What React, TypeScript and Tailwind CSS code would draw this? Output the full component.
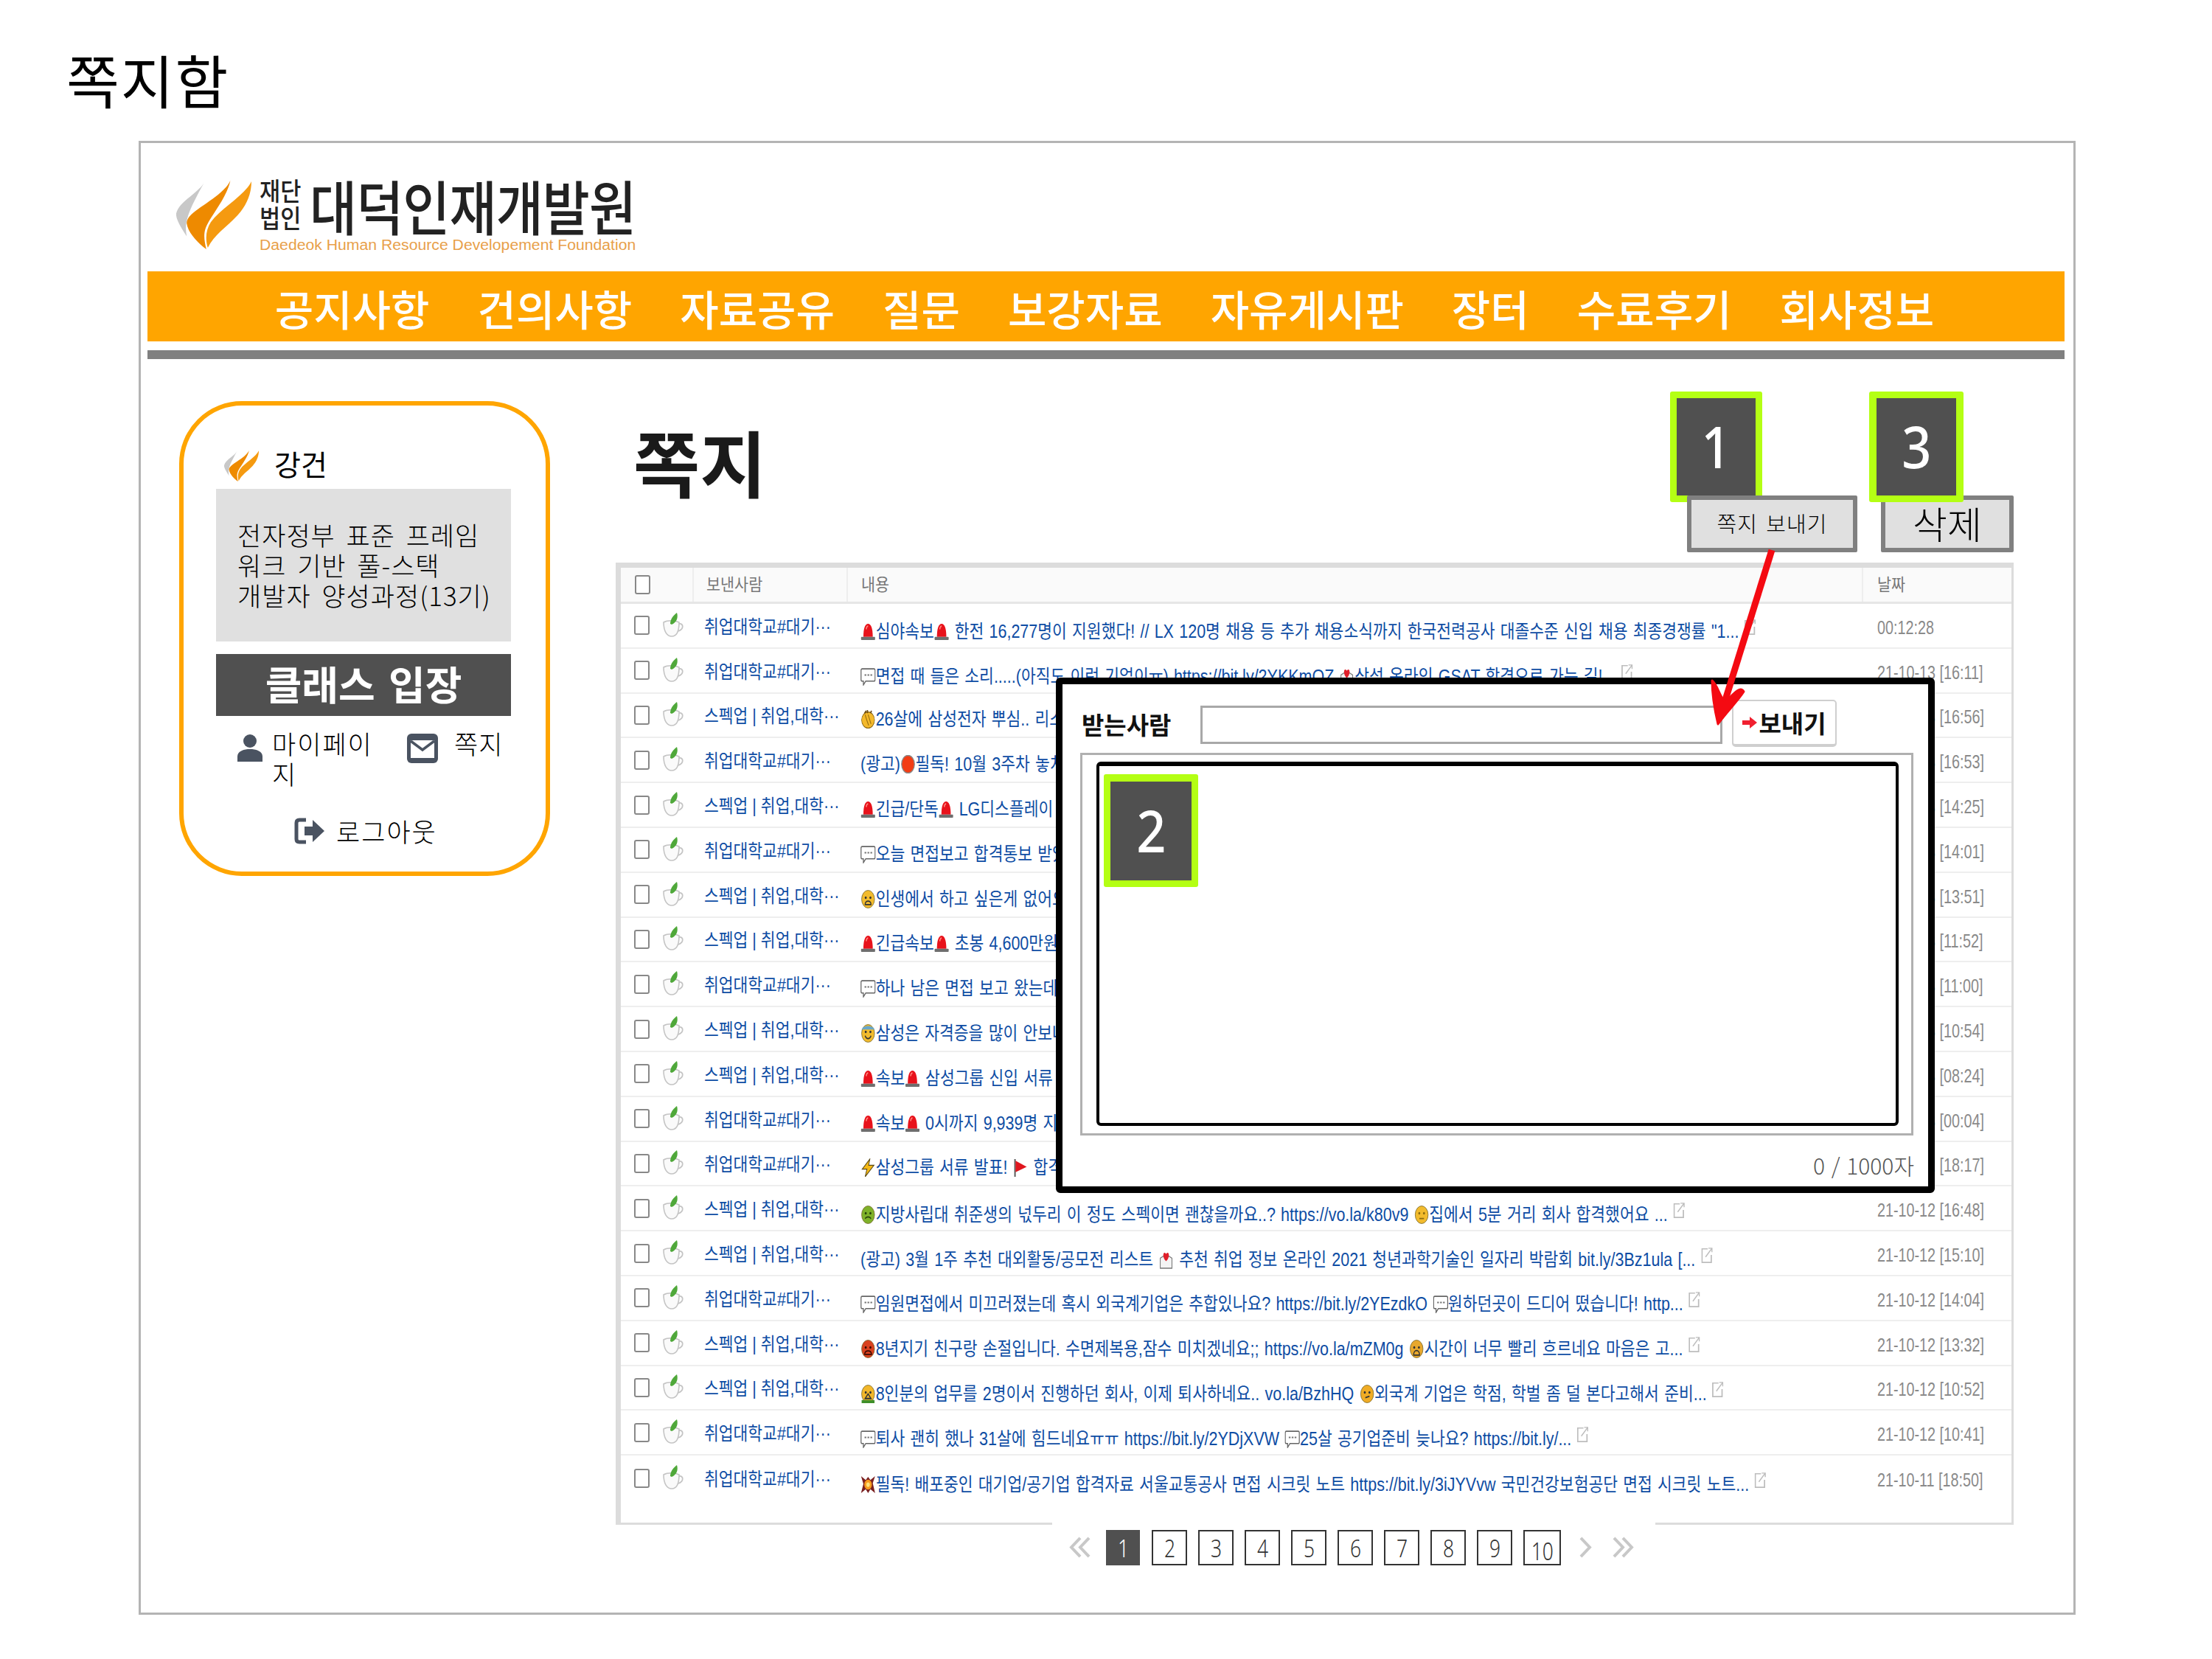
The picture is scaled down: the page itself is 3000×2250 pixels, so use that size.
import React from "react";

const KR = "font-['Noto_Sans_CJK_KR','Noto_Sans',sans-serif]";
const ROWTXT = "font-['Liberation_Sans','Noto_Sans_CJK_KR',sans-serif]";

function Flame({ className }: { className: string }) {
  return (
    <svg viewBox="0 0 100 100" preserveAspectRatio="none" className={className}>
      <path d="M38 3C30 20 4 30 0 48C-1 56 8 70 14 80C10 60 16 45 38 3Z" fill="#c8c8c8" />
      <path d="M72 2C60 28 12 45 14 62C16 76 30 90 40 98C36 80 36 72 44 58C52 44 68 22 72 2Z" fill="#ee8a00" />
      <path d="M100 3C92 22 60 40 46 60C40 70 38 82 42 96C50 78 66 68 82 50C94 36 100 20 100 3Z" fill="#f59a10" />
    </svg>
  );
}

function Cup() {
  return (
    <svg viewBox="0 0 30 33" className="w-[30px] h-[33px] shrink-0 -mt-[2px]">
      <path d="M3 13C3 26 8 32 14 32C20 32 24 26 24 13C18 10 8 10 3 13Z" fill="#fafafa" stroke="#c4c4c4" strokeWidth="1.6" />
      <path d="M24 15C30 14 31 22 23 25" fill="none" stroke="#c4c4c4" strokeWidth="1.8" />
      <path d="M12 15C12 8 17 3 21 0C23 6 21 13 14 16Z" fill="#4fa83a" />
    </svg>
  );
}

function Face({ c, mouth, eye = "#333", hat }: { c: string; mouth?: string; eye?: string; hat?: string }) {
  return (
    <>
      <ellipse cx="13" cy="12" rx="11" ry="11.5" fill={c} stroke="#7a6a30" strokeWidth="0.9" />
      <circle cx="9" cy="10" r="1.7" fill={eye} />
      <circle cx="17" cy="10" r="1.7" fill={eye} />
      <path d={mouth || "M8 16H18"} stroke={eye} strokeWidth="1.7" fill="none" />
      {hat && <path d="M2 7C5 1 21 1 24 7Z" fill={hat} />}
    </>
  );
}

function Emo({ k }: { k: string }) {
  let g: React.ReactNode = null;
  switch (k) {
    case "siren":
      g = (
        <>
          <path d="M5 19C5 8 8 2 13 2C18 2 21 8 21 19Z" fill="#e8121b" />
          <path d="M10 9C10 6 12 5 13 5" stroke="#ff8a80" strokeWidth="2" fill="none" />
          <rect x="1" y="19" width="24" height="4" rx="1" fill="#6e6e6e" />
        </>
      );
      break;
    case "bubble":
      g = (
        <>
          <path d="M3 2H23Q25 2 25 4V16Q25 18 23 18H9L5 23V18H3Q1 18 1 16V4Q1 2 3 2Z" fill="#fff" stroke="#666" strokeWidth="1.6" />
          <path d="M7 10H10M12 10H15M17 10H20" stroke="#777" strokeWidth="2" />
        </>
      );
      break;
    case "clap":
      g = (
        <>
          <ellipse cx="13" cy="13" rx="11" ry="10.5" fill="#f4b92b" stroke="#8a6510" strokeWidth="1" />
          <path d="M7 4L10 1M12 4V0M17 4L19 1" stroke="#6a4a10" strokeWidth="2" />
          <path d="M8 6C10 12 12 16 14 20M13 6C15 10 16 14 18 18" stroke="#9a7010" strokeWidth="1.4" fill="none" />
        </>
      );
      break;
    case "red":
      g = <ellipse cx="13" cy="12" rx="11" ry="11.5" fill="#f23c14" stroke="#8a8a8a" strokeWidth="1.6" />;
      break;
    case "face":
      g = <Face c="#f2bb2d" mouth="M8 19C8 13 18 13 18 19Z" />;
      break;
    case "yellow":
      g = <Face c="#f2bb2d" mouth="M9 17H17" eye="#8a6a10" />;
      break;
    case "cry":
      g = <Face c="#e8a82d" mouth="M8 20C8 12 18 12 18 20Z" />;
      break;
    case "think":
      g = <Face c="#f0ac25" mouth="M10 17L17 15" />;
      break;
    case "cool":
      g = <Face c="#f2bb2d" mouth="M8 15C10 20 16 20 18 15" hat="#68a7c9" />;
      break;
    case "green":
      g = <Face c="#7fb22a" mouth="M8 17C10 14 16 14 18 17" eye="#26400c" />;
      break;
    case "redface":
      g = <Face c="#d9411e" mouth="M7 19C8 13 18 13 19 19Z" eye="#3a0a04" />;
      break;
    case "scream":
      g = (
        <>
          <Face c="#f2b72a" mouth="M8 18L13 12L18 18Z" />
          <rect x="2" y="20" width="22" height="4" fill="#3f8f2a" />
        </>
      );
      break;
    case "mail":
      g = (
        <>
          <path d="M3 10L13 5L23 10V23H3Z" fill="#f4f4f4" stroke="#777" strokeWidth="1.3" />
          <path d="M13 14C6 9 8 2 11 3C12 3 13 4 13 5C13 4 14 3 15 3C18 2 20 9 13 14Z" fill="#e01f2a" />
        </>
      );
      break;
    case "bolt":
      g = <path d="M16 1L3 14H11L8 24L23 9H14Z" fill="#f5b915" stroke="#5a4a18" strokeWidth="1.2" />;
      break;
    case "flag":
      g = (
        <>
          <path d="M4 1V24" stroke="#555" strokeWidth="2.4" />
          <path d="M5 3L24 11L5 18Z" fill="#e0161e" />
        </>
      );
      break;
    case "boom":
      g = (
        <>
          <path d="M1 1L9 6L13 2L17 6L25 1L21 10L25 23L17 18L13 23L9 18L1 23L5 11Z" fill="#7a2020" />
          <ellipse cx="13" cy="12" rx="6.5" ry="6.5" fill="#f79a1e" />
          <circle cx="13" cy="12" r="3" fill="#ffe27a" />
        </>
      );
      break;
  }
  return (
    <svg viewBox="0 0 26 24" preserveAspectRatio="none" className="w-[24px] h-[25px] inline-block align-[-4px]">
      {g}
    </svg>
  );
}

function Rich({ s }: { s: string }) {
  const parts = s.split(/\{(\w+)\}/);
  return (
    <>
      {parts.map((p, i) => (i % 2 === 1 ? <Emo key={i} k={p} /> : <span key={i}>{p}</span>))}
    </>
  );
}

function Ext() {
  return (
    <svg viewBox="0 0 16 24" preserveAspectRatio="none" className="w-[18px] h-[22px] inline-block ml-[9px] align-[4px]">
      <path d="M9 3H1V23H14V12" fill="none" stroke="#bdbdbd" strokeWidth="1.8" />
      <path d="M6 15L15 2M10 2H15V8" fill="none" stroke="#bdbdbd" strokeWidth="1.5" />
    </svg>
  );
}

const A = "취업대학교#대기···";
const B = "스펙업 | 취업,대학···";

const rows: [string, string, string, boolean][] = [
  [A, "{siren}심야속보{siren} 한전 16,277명이 지원했다! // LX 120명 채용 등 추가 채용소식까지 한국전력공사 대졸수준 신입 채용 최종경쟁률 \"1...", "00:12:28", true],
  [A, "{bubble}면접 때 들은 소리.....(아직도 이런 기업이ㅠ) https://bit.ly/2YKKmOZ {mail}삼성 온라인 GSAT 합격으로 가는 길!...", "21-10-13 [16:11]", true],
  [B, "{clap}26살에 삼성전자 뿌심.. 리스펙합니다", "21-10-13 [16:56]", false],
  [A, "(광고){red}필독! 10월 3주차 놓치면 안될", "21-10-13 [16:53]", false],
  [B, "{siren}긴급/단독{siren} LG디스플레이 채용", "21-10-13 [14:25]", false],
  [A, "{bubble}오늘 면접보고 합격통보 받았어요", "21-10-13 [14:01]", false],
  [B, "{face}인생에서 하고 싶은게 없어요", "21-10-13 [13:51]", false],
  [B, "{siren}긴급속보{siren} 초봉 4,600만원 채용", "21-10-13 [11:52]", false],
  [A, "{bubble}하나 남은 면접 보고 왔는데요", "21-10-13 [11:00]", false],
  [B, "{cool}삼성은 자격증을 많이 안보나요", "21-10-13 [10:54]", false],
  [B, "{siren}속보{siren} 삼성그룹 신입 서류 발표", "21-10-13 [08:24]", false],
  [A, "{siren}속보{siren} 0시까지 9,939명 지원", "21-10-13 [00:04]", false],
  [A, "{bolt}삼성그룹 서류 발표! {flag} 합격", "21-10-12 [18:17]", false],
  [B, "{green}지방사립대 취준생의 넋두리 이 정도 스펙이면 괜찮을까요..? https://vo.la/k80v9 {yellow}집에서 5분 거리 회사 합격했어요 ...", "21-10-12 [16:48]", true],
  [B, "(광고) 3월 1주 추천 대외활동/공모전 리스트 {mail} 추천 취업 정보 온라인 2021 청년과학기술인 일자리 박람회 bit.ly/3Bz1ula [...", "21-10-12 [15:10]", true],
  [A, "{bubble}임원면접에서 미끄러졌는데 혹시 외국계기업은 추합있나요? https://bit.ly/2YEzdkO {bubble}원하던곳이 드디어 떴습니다! http...", "21-10-12 [14:04]", true],
  [B, "{redface}8년지기 친구랑 손절입니다. 수면제복용,잠수 미치겠네요;; https://vo.la/mZM0g {cry}시간이 너무 빨리 흐르네요 마음은 고...", "21-10-12 [13:32]", true],
  [B, "{scream}8인분의 업무를 2명이서 진행하던 회사, 이제 퇴사하네요.. vo.la/BzhHQ {think}외국계 기업은 학점, 학벌 좀 덜 본다고해서 준비...", "21-10-12 [10:52]", true],
  [A, "{bubble}퇴사 괜히 했나 31살에 힘드네요ㅠㅠ https://bit.ly/2YDjXVW {bubble}25살 공기업준비 늦나요? https://bit.ly/...", "21-10-12 [10:41]", true],
  [A, "{boom}필독! 배포중인 대기업/공기업 합격자료 서울교통공사 면접 시크릿 노트 https://bit.ly/3iJYVvw 국민건강보험공단 면접 시크릿 노트...", "21-10-11 [18:50]", true],
];

const navItems = ["공지사항", "건의사항", "자료공유", "질문", "보강자료", "자유게시판", "장터", "수료후기", "회사정보"];

function Chev({ n, dir, w }: { n: number; dir: number; w: string }) {
  return (
    <svg viewBox="0 0 32 30" preserveAspectRatio="none" className={`${w} h-[29px] shrink-0`}>
      {Array.from({ length: n }).map((_, i) => {
        const o = i * 12;
        return (
          <path
            key={i}
            d={dir < 0 ? `M${16 + o} 2L${4 + o} 15L${16 + o} 28` : `M${4 + o} 2L${16 + o} 15L${4 + o} 28`}
            fill="none"
            stroke="#c8c8c8"
            strokeWidth="4"
          />
        );
      })}
    </svg>
  );
}

function PageNum({ n }: { n: number }) {
  const w = n === 10 ? "w-[51px] pt-[9px]" : "w-[48px]";
  return (
    <div className={`${w} h-[48px] shrink-0 flex items-center justify-center border-2 border-[#333] text-[33px] leading-none text-[#333] font-['Noto_Sans',sans-serif] font-light`}>
      <span className="scale-x-[.8]">{n}</span>
    </div>
  );
}

function Badge({ n, className, inner }: { n: string; className: string; inner: string }) {
  return (
    <div className={`absolute bg-[#b4ff14] rounded-[3px] flex items-center justify-center ${className}`}>
      <div className={`bg-[#505050] flex items-center justify-center text-white text-[78px] leading-none font-medium font-['Noto_Sans',sans-serif] ${inner}`}>
        <span className="scale-x-[.9] -mt-[2px]">{n}</span>
      </div>
    </div>
  );
}

export default function App() {
  return (
    <div className={`relative w-[3000px] h-[2250px] bg-white overflow-hidden text-black ${KR}`}>
      <div className="h-[191px] pl-[90px] pt-[68px]">
        <h1 className="text-[78px] leading-none font-normal tracking-[2px]">쪽지함</h1>
      </div>

      <div className="ml-[188px] w-[2627px] h-[1999px] border-[3px] border-[#b4b4b4]">
        {/* logo */}
        <div className="h-[174px] pl-[48px] pt-[49px] flex items-start">
          <Flame className="w-[102px] h-[97px] shrink-0" />
          <div className="ml-[11px] w-[510px]">
            <div className="flex h-[72px] items-start -mt-[4px]">
              <div className="w-[60px] text-[34px] leading-[37px] text-[#222] font-medium">
                <div className="origin-left scale-x-[.9] whitespace-nowrap">재단</div>
                <div className="origin-left scale-x-[.9] whitespace-nowrap">법인</div>
              </div>
              <div className="ml-[8px] text-[80px] leading-[76px] text-[#222] font-medium whitespace-nowrap origin-left scale-x-[.87] tracking-[-1px]">
                대덕인재개발원
              </div>
            </div>
            <div className="mt-[11px] text-[20px] leading-[20px] text-[#e8a04a] whitespace-nowrap font-['Liberation_Sans',sans-serif] origin-left scale-x-[1.06]">
              Daedeok Human Resource Developement Foundation
            </div>
          </div>
        </div>

        {/* nav */}
        <nav className="ml-[9px] mr-[12px] h-[95px] bg-[#ffa500] flex items-center justify-center gap-[65px] pr-[4px] pt-[3px] text-white text-[57px] font-medium leading-none">
          {navItems.map((t) => (
            <span key={t} className="whitespace-nowrap">{t}</span>
          ))}
        </nav>
        <div className="ml-[9px] mr-[12px] mt-[12px] h-[12px] bg-[#808080]" />

        <div className="flex items-start">
          {/* sidebar */}
          <aside className="ml-[52px] mt-[57px] w-[503px] h-[644px] border-[6px] border-[#ffa500] rounded-[85px] shrink-0">
            <div className="mt-[58px] ml-[55px] h-[47px] flex items-center">
              <Flame className="w-[47px] h-[44px] shrink-0" />
              <span className="ml-[21px] text-[39px] leading-none -mt-[7px]">강건</span>
            </div>
            <div className="mt-[8px] ml-[44px] w-[400px] h-[207px] bg-[#e0e0e0] pl-[29px] pb-[2px] flex flex-col justify-center text-[35px] leading-[41px] font-light whitespace-nowrap tracking-[1px] [word-spacing:6px]">
              <div>전자정부 표준 프레임</div>
              <div>워크 기반 풀-스택</div>
              <div>개발자 양성과정(13기)</div>
            </div>
            <div className="mt-[17px] ml-[44px] w-[400px] h-[84px] bg-[#505050] flex items-center justify-center text-white text-[54px] font-bold leading-none [word-spacing:6px]">
              <span className="-mt-[5px]">클래스 입장</span>
            </div>
            <div className="mt-[16px] ml-[73px] flex items-start text-[35px] leading-[41px] font-light">
              <svg viewBox="0 0 34 38" className="w-[34px] h-[38px] mt-[8px] shrink-0">
                <circle cx="17" cy="10" r="9" fill="#4a5361" />
                <path d="M0 38V31C0 24 8 21 17 21C26 21 34 24 34 31V38Z" fill="#4a5361" />
              </svg>
              <div className="ml-[13px] w-[183px] tracking-[2px]">
                마이페이
                <br />
                지
              </div>
              <svg viewBox="0 0 42 40" className="w-[42px] h-[40px] mt-[8px] shrink-0">
                <rect x="0" y="0" width="42" height="40" rx="6" fill="#4a5361" />
                <rect x="5" y="9" width="32" height="24" fill="#fff" />
                <path d="M5 10L21 22L37 10" fill="none" stroke="#4a5361" strokeWidth="3.5" />
              </svg>
              <div className="ml-[22px] tracking-[1px]">쪽지</div>
            </div>
            <div className="mt-[38px] ml-[150px] flex items-center text-[35px] leading-[40px] font-light tracking-[2px]">
              <svg viewBox="0 0 42 36" className="w-[42px] h-[36px] shrink-0 mt-[0px]">
                <path d="M16 3H7Q3 3 3 7V29Q3 33 7 33H16" fill="none" stroke="#4a5361" strokeWidth="5" />
                <path d="M14 12H25V3L41 18L25 33V24H14Z" fill="#4a5361" />
              </svg>
              <span className="ml-[15px]">로그아웃</span>
            </div>
          </aside>

          {/* main */}
          <main className="ml-[89px] w-[1896px] shrink-0">
            <div className="h-[276px] flex justify-between">
              <h2 className="ml-[24px] mt-[88px] text-[98px] leading-none font-bold text-[#1a1a1a]">쪽지</h2>
              <div className="self-end mb-[14px] flex gap-[32px]">
                <button className="relative z-20 w-[231px] h-[77px] bg-[#e0e0e0] border-[6px] border-[#808080] rounded-[2px] text-[29px] font-light leading-none tracking-[1px] [word-spacing:4px]">
                  <span className="block -mt-[2px]">쪽지 보내기</span>
                </button>
                <button className="w-[180px] h-[77px] bg-[#e0e0e0] border-[6px] border-[#808080] rounded-[2px] text-[51px] font-light leading-none">
                  <span className="block -mt-[3px]">삭제</span>
                </button>
              </div>
            </div>

            {/* table */}
            <div className={`h-[1305px] border-[3px] border-t-[7px] border-l-[7px] border-[#dcdcdc] ${ROWTXT}`}>
              <div className="flex h-[49px] bg-[#fafafa] border-b-[3px] border-[#e6e6e6] text-[23px] text-[#777]">
                <div className="w-[97px] pl-[19px] flex items-center">
                  <div className="w-[21px] h-[26px] border-2 border-[#888] rounded-[3px] bg-white" />
                </div>
                <div className="w-[209px] border-l-2 border-[#eeeeee] pl-[17px] flex items-center">
                  <span className="origin-left scale-x-[.9] whitespace-nowrap">보낸사람</span>
                </div>
                <div className="w-[1377px] border-l-2 border-[#eeeeee] pl-[18px] flex items-center">
                  <span className="origin-left scale-x-[.9] whitespace-nowrap">내용</span>
                </div>
                <div className="flex-1 border-l-2 border-[#eeeeee] pl-[19px] flex items-center">
                  <span className="origin-left scale-x-[.9] whitespace-nowrap">날짜</span>
                </div>
              </div>
              {rows.map(([from, body, date, ext], i) => (
                <div key={i} className={`flex items-center h-[60.8px] pl-[18px] ${i < 19 ? "border-b-2 border-[#eeeeee]" : ""}`}>
                  <div className="w-[21px] h-[26px] border-2 border-[#888] rounded-[3px] shrink-0" />
                  <div className="ml-[16px] w-[30px] shrink-0">
                    <Cup />
                  </div>
                  <div className="ml-[28px] w-[212px] shrink-0 mt-[4px] text-[25px] leading-none text-[#0e4da4] whitespace-nowrap">
                    <div className="origin-left scale-x-[.86]">{from}</div>
                  </div>
                  <div className="w-[1379px] shrink-0 mt-[12px] text-[25px] leading-none text-[#0e4da4] whitespace-nowrap [word-spacing:1.5px]">
                    <div className="origin-left scale-x-[.86]">
                      <Rich s={body} />
                      {ext && <Ext />}
                    </div>
                  </div>
                  <div className="mt-[6px] text-[25px] leading-none text-[#8a8a8a] whitespace-nowrap">
                    <div className="origin-left scale-x-[.79]">{date}</div>
                  </div>
                </div>
              ))}
            </div>

            {/* pagination */}
            <div className="relative ml-[592px] -mt-[3px] w-[818px] h-[60px] bg-white pl-[22px] pt-[10px] flex items-start">
              <div className="mt-[9px] flex">
                <Chev n={2} dir={-1} w="w-[32px]" />
              </div>
              <div className="ml-[19px] w-[46px] h-[48px] shrink-0 bg-[#505050] flex items-center justify-center text-white text-[33px] leading-none font-['Noto_Sans',sans-serif] font-light">
                <span className="scale-x-[.8]">1</span>
              </div>
              <div className="ml-[16px] flex gap-[15px]">
                {[2, 3, 4, 5, 6, 7, 8, 9, 10].map((n) => (
                  <PageNum key={n} n={n} />
                ))}
              </div>
              <div className="ml-[23px] mt-[9px] flex">
                <Chev n={1} dir={1} w="w-[32px]" />
              </div>
              <div className="ml-[13px] mt-[9px] flex">
                <Chev n={2} dir={1} w="w-[32px]" />
              </div>
            </div>
          </main>
        </div>
      </div>

      {/* Annotation badges */}
      <Badge n="1" className="z-10 left-[2265px] top-[531px] w-[125px] h-[150px]" inner="w-[107px] h-[132px]" />
      <Badge n="3" className="z-30 left-[2535px] top-[531px] w-[128px] h-[150px]" inner="w-[108px] h-[132px]" />

      {/* Compose dialog */}
      <div className="absolute z-20 left-[1432px] top-[919px] w-[1192px] h-[699px] border-[9px] border-black rounded-[6px] bg-white">
        <div className="h-[93px] pl-[26px] pt-[17px] flex items-center">
          <div className="w-[161px] text-[33px] font-bold leading-none text-[#111] -mt-[2px] whitespace-nowrap">받는사람</div>
          <div className="w-[708px] h-[52px] border-[3px] border-[#a8a8a8] bg-white" />
          <button className="ml-[13px] w-[142px] h-[64px] -mt-[4px] border-2 border-b-[4px] border-[#cfcfcf] rounded-[5px] bg-white flex items-center justify-center text-[33px] font-bold leading-none text-[#111] whitespace-nowrap">
            <svg viewBox="0 0 20 16" className="w-[20px] h-[16px] mr-[2px]">
              <path d="M0 5H10V0L20 8L10 16V11H0Z" fill="#f02030" />
            </svg>
            보내기
          </button>
        </div>
        <div className="ml-[24px] w-[1130px] h-[519px] border-[3px] border-[#b0b0b0] pt-[9px] pl-[19px]">
          <div className="relative w-[1088px] h-[494px] border-[4px] border-t-[6px] border-black rounded-[6px]">
            <Badge n="2" className="left-[6px] top-[11px] w-[128px] h-[153px]" inner="w-[110px] h-[134px]" />
          </div>
        </div>
        <div className="mt-[24px] pr-[19px] text-right text-[30px] leading-[32px] text-[#555] font-light [word-spacing:2px]">
          <span>0 / 1000자</span>
        </div>
      </div>

      {/* Red arrow */}
      <svg viewBox="0 0 120 250" className="absolute z-40 left-[2300px] top-[740px] w-[120px] h-[250px]">
        <path d="M103 6L36 222" stroke="#f40a12" strokeWidth="9" fill="none" />
        <path d="M22 183C22 205 26 225 30 242C42 225 56 212 65 198C60 190 52 200 40 212C32 205 30 190 22 183Z" fill="#f40a12" stroke="#f40a12" strokeWidth="3" strokeLinejoin="round" />
      </svg>
    </div>
  );
}
